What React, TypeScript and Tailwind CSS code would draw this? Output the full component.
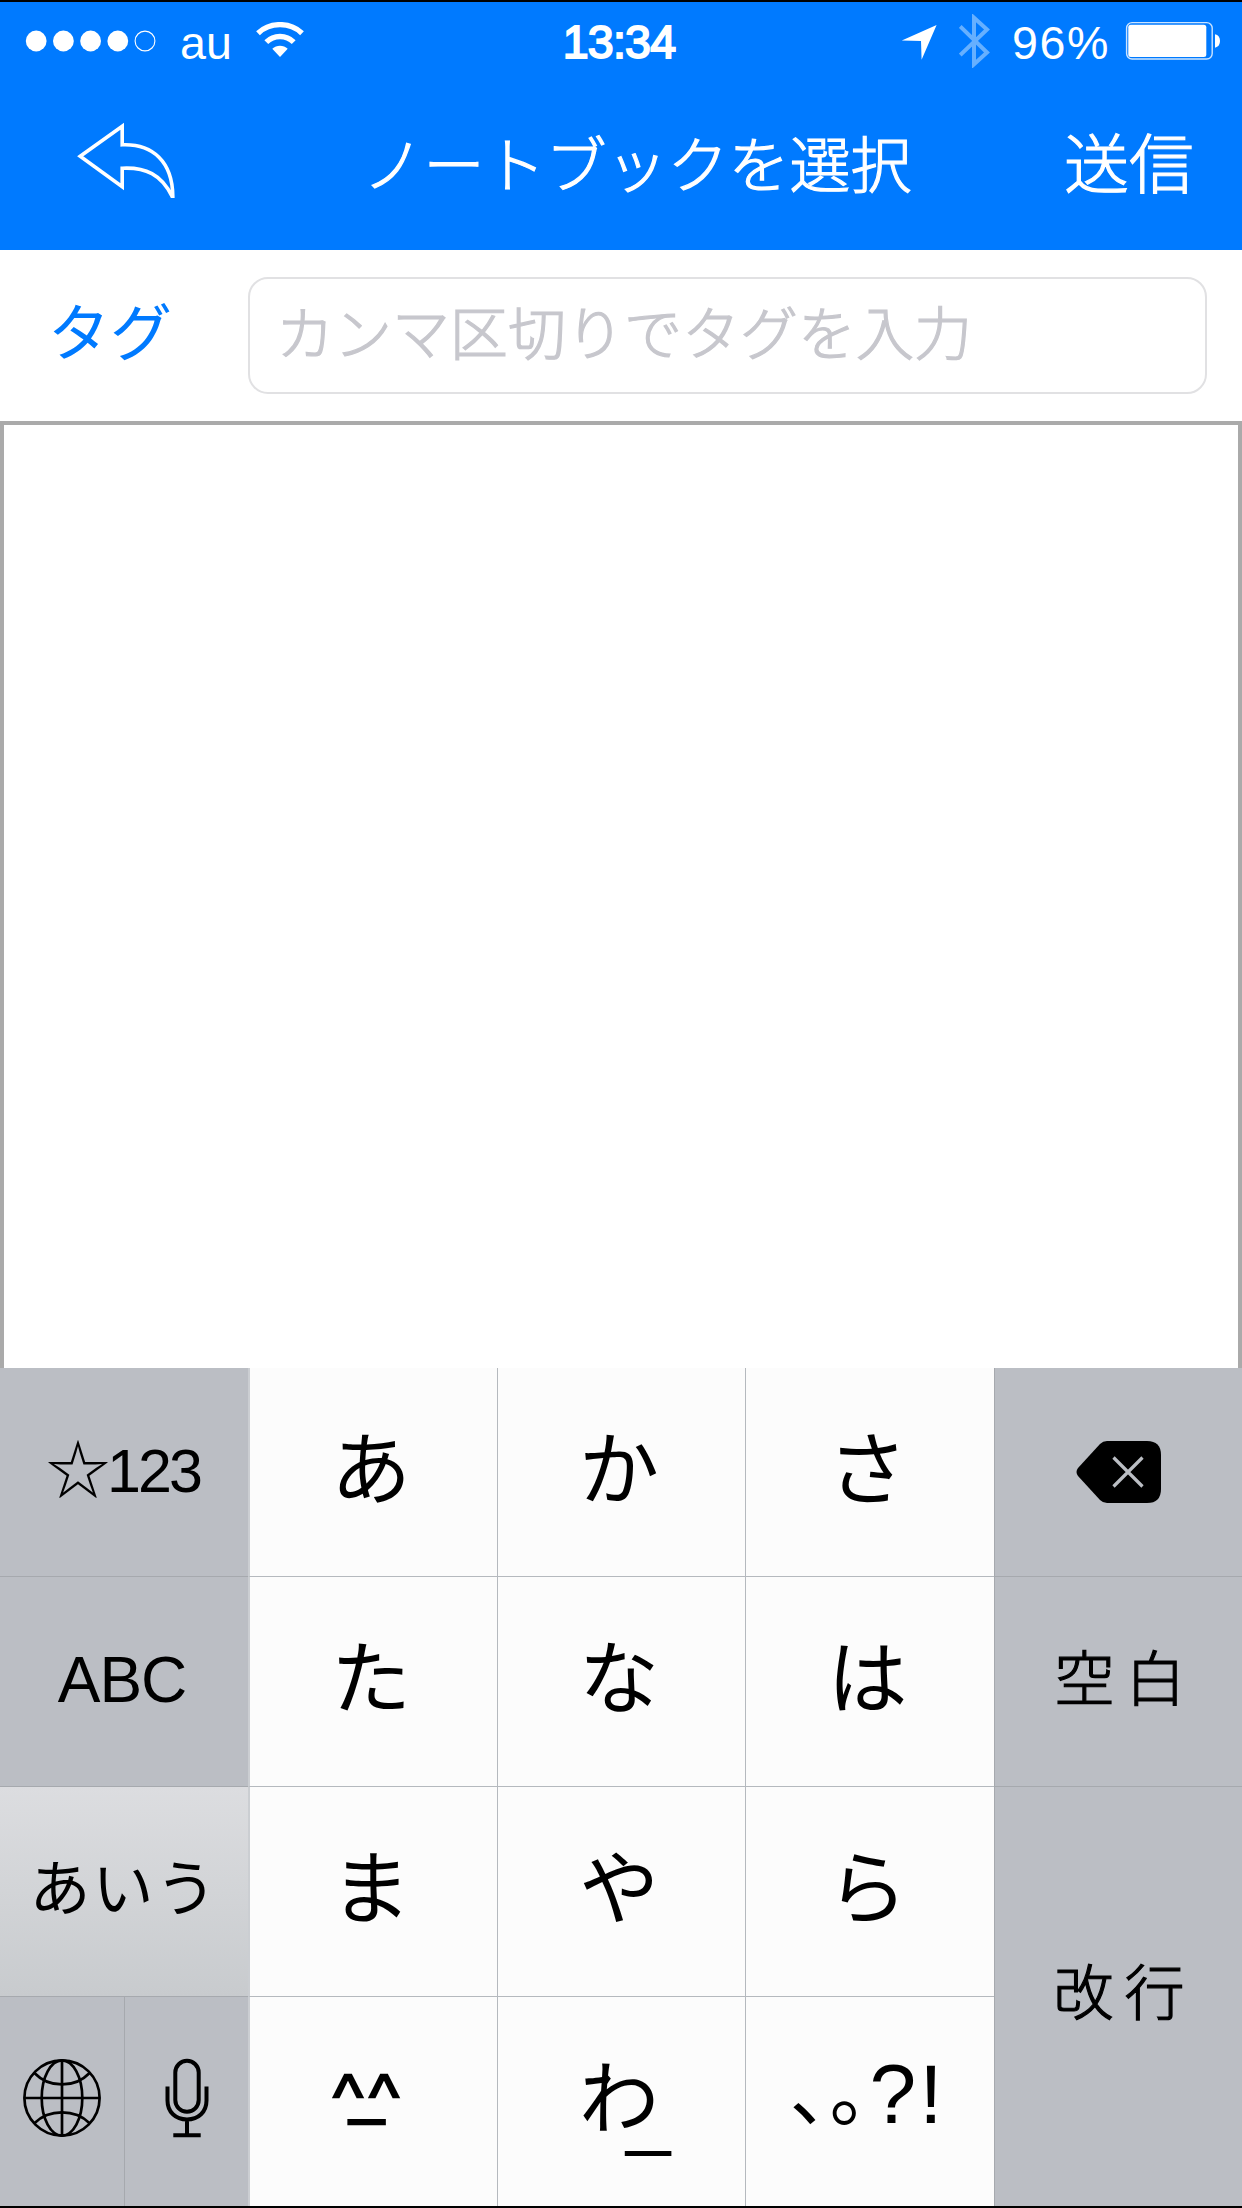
import React from "react";

const JP = "font-['Noto_Sans_CJK_JP',sans-serif]";
const LATIN = "font-['Liberation_Sans','Noto_Sans_CJK_JP',sans-serif]";
const LIGHT = "font-light [-webkit-text-stroke:1.2px_currentColor]";

function SignalDots() {
  return (
    <svg className="ml-[25px] h-[22px] w-[132px]" viewBox="0 0 132 22" fill="#fff">
      <circle cx="11.2" cy="11" r="10.4" />
      <circle cx="38.4" cy="11" r="10.4" />
      <circle cx="65.6" cy="11" r="10.4" />
      <circle cx="92.8" cy="11" r="10.4" />
      <circle cx="120" cy="11" r="9.9" fill="none" stroke="#fff" strokeWidth="1.1" />
    </svg>
  );
}

function WifiIcon() {
  return (
    <svg className="h-[36px] w-[48px]" viewBox="0 0 48 36" fill="none" stroke="#fff">
      <path d="M2 11.2C14-.2 34-.2 46 11.2" strokeWidth="5.4" />
      <path d="M10.3 20.2C17.8 12.6 30.2 12.6 37.7 20.2" strokeWidth="5.4" />
      <path d="M16.3 26.8C20.5 22.6 27.5 22.6 31.7 26.8L24 35Z" fill="#fff" stroke="none" />
    </svg>
  );
}

function StatusBar() {
  return (
    <div className="grid h-[78px] grid-cols-[1fr_auto_1fr] items-center">
      <div className="flex items-center">
        <SignalDots />
        <span className={`${LATIN} ml-[23px] mt-[5px] text-[46.6px] leading-none`}>au</span>
        <span className="-mt-[2px] ml-[24px] flex"><WifiIcon /></span>
      </div>
      <span className={`${LATIN} mt-[3px] mr-[4px] text-[46.6px] leading-none tracking-[-0.8px] [-webkit-text-stroke:1.9px_#fff]`}>13:34</span>
      <div className="flex items-center justify-end">
        <svg className="mt-[2px] h-[36px] w-[36px]" viewBox="0 0 36 36" fill="#fff">
          <path d="M.8 16.4 35.6 1 20.6 35.8 20 17Z" />
        </svg>
        <svg className="ml-[22px] h-[54px] w-[31px]" viewBox="0 0 31 54" fill="none" stroke="#66b0ff" strokeWidth="4">
          <path d="M1.2 12.5 28 38.5 15 50.3V3.7L28 15.5 1.2 41" />
        </svg>
        <span className={`${LATIN} ml-[22px] mt-[4px] text-[46.6px] leading-none tracking-[1.6px]`}>96%</span>
        <svg className="ml-[15px] mr-[21px] h-[40px] w-[96px]" viewBox="0 0 96 40">
          <rect x="1.6" y="1.6" width="85.6" height="36.4" rx="5.5" fill="none" stroke="#fff" strokeOpacity=".8" strokeWidth="1.4" />
          <rect x="3.3" y="3.8" width="78" height="32.2" rx="2.5" fill="#fff" />
          <path d="M90 13.3Q95 14.5 95 20T90 26.7Z" fill="#fff" />
        </svg>
      </div>
    </div>
  );
}

function NavBar() {
  return (
    <div className="grid h-[170px] grid-cols-[280px_1fr_280px] items-center">
      <svg className="-mt-[10px] ml-[77px] h-[76px] w-[100px]" viewBox="0 0 100 76" fill="none" stroke="#fff" strokeWidth="3.6">
        <path d="M3.2 34.2 45.2 4.2V22.8C76 21.5 95.5 40 95.8 74.2H95C84.5 52.5 68.5 45 45.2 46.2V64.8Z" />
      </svg>
      <span className={`${JP} ${LIGHT} -mt-[7px] pl-[32px] text-center text-[61px] leading-none whitespace-nowrap`}>ノートブックを選択</span>
      <span className={`${JP} ${LIGHT} mr-[48px] -mt-[10px] text-right text-[65px] leading-none`}>送信</span>
    </div>
  );
}

function Key({ children, className = "" }: { children: React.ReactNode; className?: string }) {
  return <div className={`flex items-center justify-center leading-none ${className}`}>{children}</div>;
}

function Kana({ children, className = "" }: { children: React.ReactNode; className?: string }) {
  return (
    <Key className={`${JP} border-[#b5b9be] bg-[#fcfcfc] pr-[5px] pb-[19px] text-[80px] ${className}`}>{children}</Key>
  );
}

const SIDE = "bg-[#bbbec4] border-[#a6a9ae]";
const FIRST = "border-l-2 [border-left-color:#cbced2]";

function GlobeIcon() {
  return (
    <svg className="h-[80px] w-[80px]" viewBox="0 0 80 80" fill="none" stroke="#000" strokeWidth="2.7">
      <circle cx="40" cy="40" r="37.6" />
      <ellipse cx="40" cy="40" rx="20.3" ry="37.6" />
      <path d="M40 2.3V77.7M2.3 40H77.7" />
      <path d="M12.7 15.2C27 30.2 53 30.2 67.3 15.2M12.7 65C27 50.8 53 50.8 67.3 65" />
    </svg>
  );
}

function MicIcon() {
  return (
    <svg className="h-[80px] w-[46px]" viewBox="0 0 46 80" fill="none" stroke="#000" strokeWidth="4">
      <rect x="11.3" y="2.8" width="23.4" height="51" rx="11.7" />
      <path d="M3.5 28.5V42.5C3.5 54 11.5 61.5 23 61.5S42.5 54 42.5 42.5V28.5M23 61.5V77M9.3 77.3H36.7" />
    </svg>
  );
}

function Keyboard() {
  return (
    <div className="grid h-[838px] grid-cols-[248px_249px_248px_249px_248px] grid-rows-[208px_210px_210px_210px] text-black">
      <Key className={`${SIDE} ${LATIN} pb-[2px] pr-[2px] text-[61px]`}>
        <span className="text-[64px]">☆</span>
        <span className="-ml-[3px] tracking-[-3px]">123</span>
      </Key>
      <Kana className={FIRST}>あ</Kana>
      <Kana className="border-l">か</Kana>
      <Kana className="border-l">さ</Kana>
      <Key className={`${SIDE} border-l`}>
        <svg className="h-[64px] w-[86px]" viewBox="0 0 86 64">
          <path d="M31 1H71Q85 1 85 15V49Q85 63 71 63H31Q27 63 24 60L2 36Q-1 32 2 28L24 4Q27 1 31 1Z" fill="#000" />
          <path d="M37.5 17.5 66.5 46.5M66.5 17.5 37.5 46.5" stroke="#bbbec4" strokeWidth="3.2" />
        </svg>
      </Key>

      <Key className={`${SIDE} ${LATIN} border-t pr-[4px] pb-[4px] text-[64px] tracking-[-1px]`}>ABC</Key>
      <Kana className={`${FIRST} border-t`}>た</Kana>
      <Kana className="border-t border-l">な</Kana>
      <Kana className="border-t border-l">は</Kana>
      <Key className={`${SIDE} ${JP} ${LIGHT} border-l border-t pb-[14px] pl-[14px] text-[60px] tracking-[11px]`}>空白</Key>

      <Key className={`${JP} border-t border-[#a6a9ae] bg-gradient-to-b from-[#dcdde0] to-[#c8cbce] pb-[15px] text-[61px] tracking-[2px]`}>あいう</Key>
      <Kana className={`${FIRST} border-t`}>ま</Kana>
      <Kana className="border-t border-l">や</Kana>
      <Kana className="border-t border-l">ら</Kana>
      <Key className={`${SIDE} ${JP} ${LIGHT} row-span-2 border-l border-t pb-[16px] pl-[12px] text-[60px] tracking-[11px]`}>改行</Key>

      <div className="grid grid-cols-2">
        <Key className={`${SIDE} border-t pb-[8px]`}><GlobeIcon /></Key>
        <Key className={`${SIDE} border-l border-t pb-[8px]`}><MicIcon /></Key>
      </div>
      <Key className={`${LATIN} ${FIRST} border-t border-[#b5b9be] bg-[#fcfcfc] pr-[8px] pb-[12px] text-[62px] [-webkit-text-stroke:2.4px_#000]`}>
        <span className="relative tracking-[7px]">
          ^^
          <span className="absolute left-[16px] -top-[5px] tracking-normal">_</span>
        </span>
      </Key>
      <Kana className="border-t border-l">
        <span className="relative">
          わ
          <span className={`${LATIN} absolute left-[47px] top-[21px]`}>_</span>
        </span>
      </Kana>
      <Kana className="border-t border-l">
        <span className="flex items-center">
          <span className="-mt-[11px] text-[76px] tracking-[2px] [font-feature-settings:'halt']">、。</span>
          <span className={`${LATIN} pt-[4px] text-[84px] tracking-[3px]`}>?!</span>
        </span>
      </Kana>
    </div>
  );
}

export default function App() {
  return (
    <div className="flex h-[2208px] w-[1242px] flex-col overflow-hidden border-y-2 border-black bg-white">
      <header className="h-[248px] bg-[#007aff] text-white">
        <StatusBar />
        <NavBar />
      </header>
      <div className="flex h-[171px] items-center">
        <span className={`${JP} w-[248px] pb-[13px] pl-[48px] text-[62px] leading-none text-[#007aff]`}>タグ</span>
        <div className={`${JP} ${LIGHT} flex h-[117px] w-[959px] items-center rounded-[20px] border-2 border-[#e1e1e3] pb-[11px] pl-[26px] text-[58px] leading-none text-[#c7c7cd]`}>
          カンマ区切りでタグを入力
        </div>
      </div>
      <main className="h-[947px] border-x-4 border-t-4 border-[#aaaaaa]" />
      <Keyboard />
    </div>
  );
}
